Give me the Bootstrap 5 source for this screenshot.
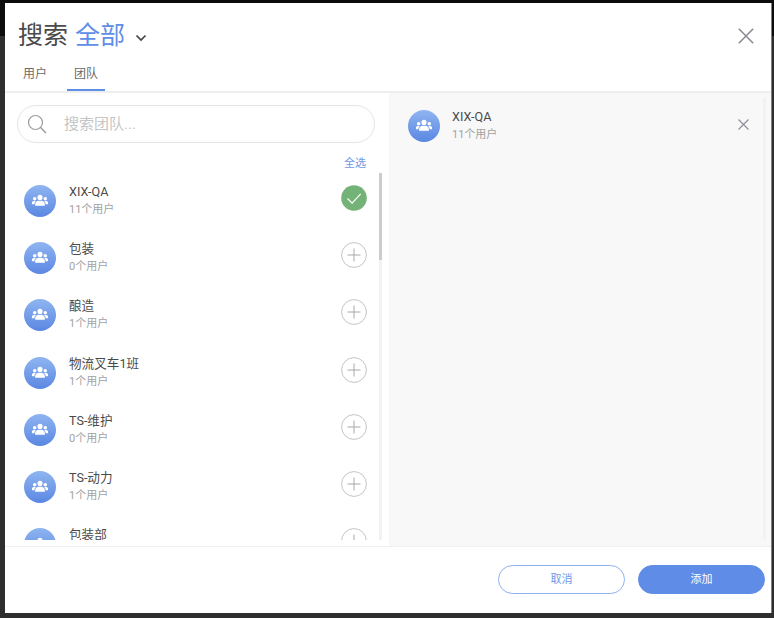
<!DOCTYPE html>
<html lang="zh">
<head>
<meta charset="utf-8">
<title>搜索</title>
<link href="https://cdn.jsdelivr.net/npm/bootstrap@5.3.0/dist/css/bootstrap.min.css" rel="stylesheet">
<style>
html,body{height:100%;}
body{background:linear-gradient(#0c0c0c 0,#0c0c0c 36px,#2e2e2e 36px);font-family:Roboto,"Noto Sans CJK SC",sans-serif;overflow:hidden;color:#4a4a4a;}
.backdrop-top{height:3px;}
.dlg{width:766px;height:610px;margin-left:5px;background:#fff;box-shadow:1px 0 0 #808080;}
.dlg-head{height:90px;border-bottom:2px solid #eeeeee;padding:0 0 0 13px;}
.dlg-title{font-size:25px;line-height:36px;padding-top:15px;height:51px;color:#4a4a4a;}
.dlg-title .accent{color:#5f8ee6;margin-left:7px;}
.tab-row{padding-left:5px;}
.tab-item{font-size:12px;color:#6a6a6a;width:38px;text-align:center;line-height:18px;height:37px;padding-top:11px;}
.tab-item.first{width:24px;margin-right:20px;}
.tab-item.on{border-bottom:2px solid #5f8ee6;}
.dlg-close{padding:25px 17px 0 0;}
.dlg-main{height:453px;}
.pane-left{width:384px;flex:none;position:relative;}
.pane-right{flex:1 1 auto;background:#f8f8f8;position:relative;}
.search-pill{height:38px;margin:12px 14px 0 12px;border:1px solid #e4e4e4;border-radius:19px;padding-left:9px;}
.search-pill span{font-size:15px;color:#c6c6c6;margin-left:17px;}
.select-all{font-size:11px;color:#6f98e6;text-align:right;padding-right:23px;height:17px;line-height:17px;margin-top:12px;margin-bottom:1px;}
.rows{height:367px;overflow:hidden;}
.row-item{height:57.2px;padding:12px 22.500px 0 19px;flex:none;}
.ava{width:32px;height:32px;border-radius:50%;background:linear-gradient(180deg,#8fb5f0,#5b87e2);flex:none;margin-right:13px;}
.item-txt{margin-top:-2px;}
.item-name{font-size:12.600px;line-height:18px;color:#4a4a4a;}
.item-sub{font-size:11px;line-height:17px;color:#a2a2a2;}
.tog{width:26px;height:26px;flex:none;}
.track{position:absolute;width:3px;background:#f2f2f2;}
.track-l{left:374px;top:80px;height:367px;}
.track-r{left:374px;top:5px;height:442px;}
.thumb{width:3px;height:87px;background:#cccccc;}
.sel-row{padding:17px 22px 0 19px;}
.sel-row .ava{margin-right:12px;}
.sel-x{margin-top:9px;}
.dlg-foot{height:67px;border-top:1px solid #f0f0f0;padding:18px 6px 0 0;}
.pill-btn{width:127px;height:29px;border-radius:15px;font-size:11px;line-height:1;padding:0;margin-left:13px;}
.pill-out{background:#fff;border:1px solid #8fb1ef;color:#6f98e6;}
.pill-out:hover{background:#fff;color:#6f98e6;border-color:#8fb1ef;}
.pill-fill{background:#5f8ce6;border:1px solid #5f8ce6;color:#fff;}
.pill-fill:hover{background:#5f8ce6;color:#fff;border-color:#5f8ce6;}
.chev{margin-left:10px;margin-top:4px;}
</style>
</head>
<body>
<svg width="0" height="0" class="position-absolute">
<symbol id="grp" viewBox="0 0 32 32">
<g fill="#fff" transform="translate(16 15.500) scale(.88) translate(-16 -15.500)">
<circle cx="16" cy="12" r="2.900"/>
<circle cx="10" cy="13.600" r="2"/>
<circle cx="22" cy="13.600" r="2"/>
<path d="M10.500 21.500v-1.600c0-2.600 2-4 4-4h3c2 0 4 1.400 4 4v1.600z"/>
<path d="M8.600 16.200h2.600c-1 .9-1.500 2.100-1.600 3.600H7.900c-.8 0-1.100-.4-1.100-1 0-1.500.7-2.600 1.800-2.600z"/>
<path d="M23.400 16.200h-2.600c1 .9 1.500 2.100 1.600 3.600h1.700c.8 0 1.100-.4 1.100-1 0-1.500-.7-2.600-1.800-2.600z"/>
</g>
</symbol>
<symbol id="plus" viewBox="0 0 26 26">
<circle cx="13" cy="13" r="12.400" fill="#fff" stroke="#c4c4c4" stroke-width="1"/>
<path d="M13 6.500v13M6.500 13h13" stroke="#a8a8a8" stroke-width="1" fill="none"/>
</symbol>
<symbol id="okc" viewBox="0 0 26 26">
<circle cx="13" cy="13" r="12.800" fill="#74b377"/>
<path d="M6.500 13.500l4.600 4.600 8.600-9.200" stroke="#fff" stroke-width="1.200" fill="none"/>
</symbol>
</svg>
<div class="backdrop-top"></div>
<div class="dlg d-flex flex-column">
  <div class="dlg-head d-flex justify-content-between">
    <div>
      <div class="dlg-title d-flex align-items-center">
        <span>搜索</span><span class="accent">全部</span>
        <svg class="chev" width="12" height="8" viewBox="0 0 12 8"><path d="M1.500 1.500L6 6l4.500-4.500" fill="none" stroke="#444" stroke-width="1.700"/></svg>
      </div>
      <div class="d-flex tab-row">
        <div class="tab-item first">用户</div>
        <div class="tab-item on">团队</div>
      </div>
    </div>
    <div class="dlg-close">
      <svg width="16" height="16" viewBox="0 0 16 16" class="d-block"><path d="M.8.800l14.400 14.400M15.200.800L.8 15.200" stroke="#8b8b95" stroke-width="1.600" fill="none"/></svg>
    </div>
  </div>
  <div class="dlg-main d-flex">
    <div class="pane-left">
      <div class="search-pill d-flex align-items-center">
        <svg width="20" height="20" viewBox="0 0 20 20"><circle cx="8.500" cy="8.500" r="7" fill="none" stroke="#9a9a9a" stroke-width="1.200"/><path d="M13.600 13.600l5.400 5.400" stroke="#9a9a9a" stroke-width="1.400"/></svg>
        <span>搜索团队...</span>
      </div>
      <div class="select-all">全选</div>
      <div class="rows d-flex flex-column">
        <div class="row-item d-flex align-items-start"><div class="ava"><svg width="32" height="32"><use href="#grp"/></svg></div><div class="flex-grow-1 item-txt"><div class="item-name">XIX-QA</div><div class="item-sub">11个用户</div></div><svg class="tog"><use href="#okc"/></svg></div>
        <div class="row-item d-flex align-items-start"><div class="ava"><svg width="32" height="32"><use href="#grp"/></svg></div><div class="flex-grow-1 item-txt"><div class="item-name">包装</div><div class="item-sub">0个用户</div></div><svg class="tog"><use href="#plus"/></svg></div>
        <div class="row-item d-flex align-items-start"><div class="ava"><svg width="32" height="32"><use href="#grp"/></svg></div><div class="flex-grow-1 item-txt"><div class="item-name">酿造</div><div class="item-sub">1个用户</div></div><svg class="tog"><use href="#plus"/></svg></div>
        <div class="row-item d-flex align-items-start"><div class="ava"><svg width="32" height="32"><use href="#grp"/></svg></div><div class="flex-grow-1 item-txt"><div class="item-name">物流叉车1班</div><div class="item-sub">1个用户</div></div><svg class="tog"><use href="#plus"/></svg></div>
        <div class="row-item d-flex align-items-start"><div class="ava"><svg width="32" height="32"><use href="#grp"/></svg></div><div class="flex-grow-1 item-txt"><div class="item-name">TS-维护</div><div class="item-sub">0个用户</div></div><svg class="tog"><use href="#plus"/></svg></div>
        <div class="row-item d-flex align-items-start"><div class="ava"><svg width="32" height="32"><use href="#grp"/></svg></div><div class="flex-grow-1 item-txt"><div class="item-name">TS-动力</div><div class="item-sub">1个用户</div></div><svg class="tog"><use href="#plus"/></svg></div>
        <div class="row-item d-flex align-items-start"><div class="ava"><svg width="32" height="32"><use href="#grp"/></svg></div><div class="flex-grow-1 item-txt"><div class="item-name">包装部</div><div class="item-sub">0个用户</div></div><svg class="tog"><use href="#plus"/></svg></div>
      </div>
      <div class="track track-l"><div class="thumb"></div></div>
    </div>
    <div class="pane-right">
      <div class="sel-row d-flex align-items-start">
        <div class="ava"><svg width="32" height="32"><use href="#grp"/></svg></div>
        <div class="flex-grow-1 item-txt"><div class="item-name">XIX-QA</div><div class="item-sub">11个用户</div></div>
        <svg class="sel-x" width="11" height="11" viewBox="0 0 11 11"><path d="M.5.500l10 10M10.500.500l-10 10" stroke="#8f8f98" stroke-width="1.200" fill="none"/></svg>
      </div>
      <div class="track track-r"></div>
    </div>
  </div>
  <div class="dlg-foot d-flex justify-content-end align-items-start">
    <button type="button" class="btn pill-btn pill-out">取消</button>
    <button type="button" class="btn pill-btn pill-fill">添加</button>
  </div>
</div>
</body>
</html>
